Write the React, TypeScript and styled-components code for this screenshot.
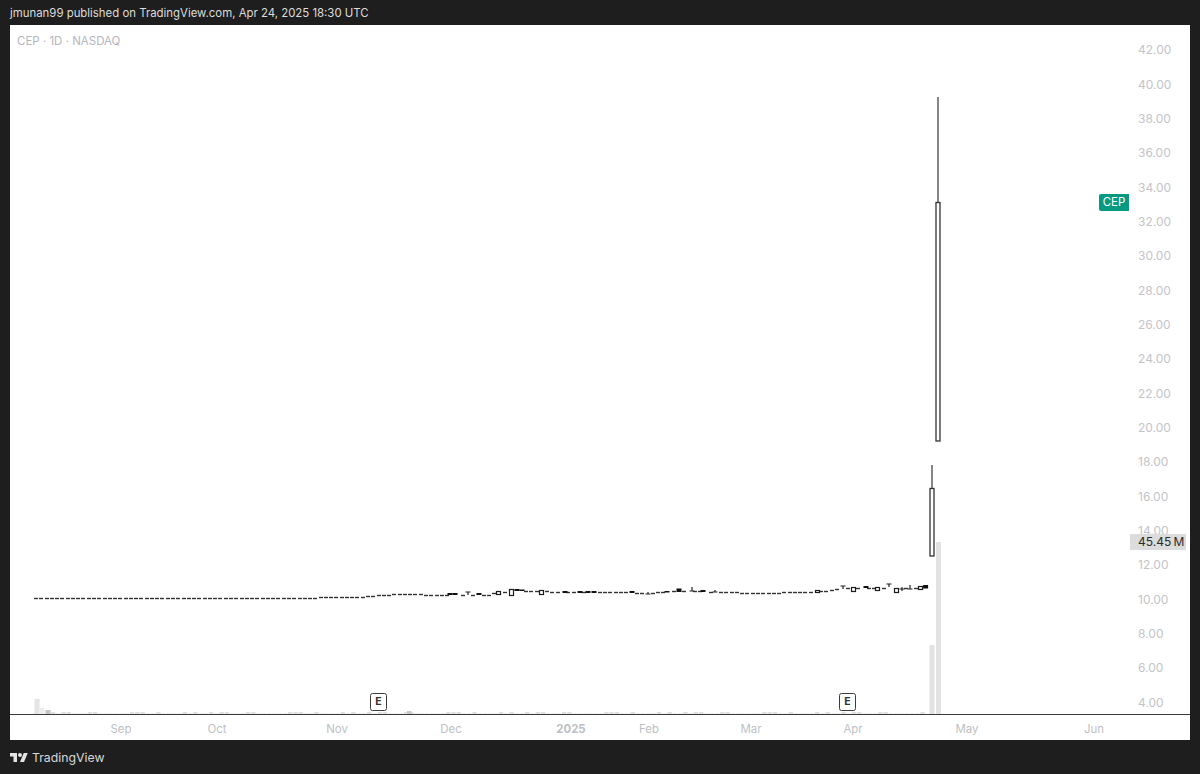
import React from "react";
import styled, { createGlobalStyle } from "styled-components";

const Global = createGlobalStyle`
  html, body { margin: 0; padding: 0; background: #1e1e1e; }
  body { font-family: Inter, "Liberation Sans", Arial, sans-serif; }
`;

const Page = styled.div`
  width: 1200px;
  height: 774px;
  background: #1e1e1e;
  display: flex;
  flex-direction: column;
  overflow: hidden;
`;
const Header = styled.header`
  height: 25px;
  padding: 0 0 0 10px;
  display: flex;
  align-items: center;
  color: #dcdcdc;
  font-size: 11.4px;
  line-height: 30px;
  white-space: nowrap;
`;
const Panel = styled.main`
  margin: 0 10px;
  height: 715px;
  background: #fff;
  display: flex;
  flex-direction: column;
`;
const ChartRow = styled.section`
  height: 689px;
  display: flex;
  border-bottom: 1px solid #3a3a3a;
  box-sizing: content-box;
`;
const Plot = styled.div`
  position: relative;
  flex: 1;
`;
const PlotSvg = styled.svg`
  display: block;
  width: 1120px;
  height: 689px;
`;
const Title = styled.div`
  position: absolute;
  left: 7px;
  top: 9px;
  font-size: 11.5px;
  line-height: 14px;
  color: #b4b6bc;
`;
const PriceTag = styled.div`
  position: absolute;
  right: 1px;
  top: 168.5px;
  width: 30px;
  height: 17px;
  background: #089981;
  border-radius: 2px 0 0 2px;
  color: #fff;
  font-size: 11.4px;
  line-height: 17px;
  text-align: center;
`;
const EarningsBadge = styled.div<{ $x: number }>`
  position: absolute;
  left: ${(p) => p.$x - 10}px;
  top: 668px;
  width: 15px;
  height: 16px;
  border: 1.5px solid #3c3c3c;
  border-radius: 2.5px;
  background: #fff;
  color: #333;
  font-size: 10.5px;
  font-weight: 700;
  line-height: 16px;
  text-align: center;
`;
const PriceAxis = styled.aside`
  position: relative;
  width: 60px;
  padding-top: 8.3px;
  display: flex;
  flex-direction: column;
`;
const PriceTick = styled.div`
  height: 34.34px;
  flex: none;
  padding-left: 8px;
  font-size: 12px;
  line-height: 34.34px;
  color: #c3c4c9;
`;
const VolumeTag = styled.div`
  position: absolute;
  left: 0;
  top: 509px;
  width: 56px;
  height: 16px;
  padding-left: 8px;
  box-sizing: border-box;
  background: #dcdcdc;
  color: #2a2a2a;
  font-size: 12px;
  line-height: 16px;
  white-space: nowrap;
`;
const TimeAxis = styled.div`
  position: relative;
  flex: 1;
`;
const TimeTick = styled.span<{ $x: number; $strong?: boolean }>`
  position: absolute;
  left: ${(p) => p.$x - 10}px;
  top: 5.5px;
  transform: translateX(-50%);
  font-size: 11.4px;
  line-height: 16px;
  font-weight: ${(p) => (p.$strong ? 700 : 400)};
  color: #bdbfc4;
`;
const Footer = styled.footer`
  flex: 1;
  display: flex;
  align-items: center;
  gap: 4px;
  padding: 0 0 0 10px;
  color: #d8d8d8;
  margin-top: 1px;
`;
const LogoMark = styled.svg`
  width: 18px;
  height: 14px;
  display: block;
`;
const BrandName = styled.span`
  font-size: 12.3px;
  line-height: 16px;
`;

const PRICES = ["42.00","40.00","38.00","36.00","34.00","32.00","30.00","28.00","26.00","24.00","22.00","20.00","18.00","16.00","14.00","12.00","10.00","8.00","6.00","4.00"];
const MONTHS: { label: string; x: number; strong?: boolean }[] = [
  { label: "Sep", x: 121 }, { label: "Oct", x: 217 }, { label: "Nov", x: 337 },
  { label: "Dec", x: 451 }, { label: "2025", x: 571, strong: true }, { label: "Feb", x: 649 },
  { label: "Mar", x: 751 }, { label: "Apr", x: 853 }, { label: "May", x: 967 }, { label: "Jun", x: 1094 },
];

// centre line of the candle row: [x, y] knots in page pixels
const KNOTS: [number, number][] = [
  [34, 598.5],[100, 598],[150, 598.3],[190, 597.8],[290, 597.6],[350, 597.4],[378, 595.5],[400, 593.6],
  [440, 595],[490, 594.5],[500, 592],[530, 590.6],[560, 592],[600, 591.5],[650, 593],[680, 590.5],
  [720, 592],[760, 593],[820, 591.5],[845, 588],[925, 587.5],
];
const centre = (x: number) => {
  for (let i = 1; i < KNOTS.length; i++) {
    const [x0, y0] = KNOTS[i - 1];
    const [x1, y1] = KNOTS[i];
    if (x <= x1) return y0 + ((y1 - y0) * (x - x0)) / (x1 - x0);
  }
  return 587.5;
};

type Shape = "hollow" | "solid" | "cross" | "foot" | "top";
const SPECIAL: [number, Shape, number, number][] = [
  [450, "solid", 593, 595], [455, "solid", 593, 595], [468, "top", 592, 595], [479, "solid", 593, 595],
  [498, "hollow", 590.5, 593.5], [511, "hollow", 589, 595], [517, "solid", 589, 591], [522, "solid", 589.5, 591],
  [541, "hollow", 589.5, 593.5], [565, "solid", 591, 593], [580, "solid", 591, 593], [588, "solid", 591, 593], [594, "solid", 591, 593],
  [632, "solid", 591, 593], [648, "foot", 592, 594], [667, "solid", 591, 592.5], [679, "solid", 588.5, 592],
  [692, "foot", 587, 591], [703, "solid", 590, 592], [715, "foot", 590, 592], [817, "hollow", 590, 592],
  [843, "top", 586, 589], [853, "hollow", 586.5, 590.5], [866, "solid", 586, 588], [877, "hollow", 586.5, 589.5],
  [889, "top", 584, 587], [896, "hollow", 587.5, 591.5], [902, "cross", 587, 591], [910, "foot", 585, 589],
  [920, "hollow", 585.5, 588.5], [925.6, "solid", 585, 588.5],
];

const Candles = () => {
  const step = 5.27;
  const items: React.ReactNode[] = [];
  for (let i = 0; i < 169; i++) {
    const x = 36 + i * step;
    const sp = SPECIAL.find((s) => Math.abs(s[0] - x) < step / 2);
    if (sp) continue;
    const y = Math.round(centre(x));
    const left = Math.round(x - 2);
    items.push(<rect key={i} x={left} y={y - 0.2} width={4} height={1.4} fill="#333" />);
  }
  SPECIAL.forEach(([x, kind, y0, y1], i) => {
    const k = `s${i}`;
    if (kind === "hollow") items.push(<rect key={k} x={Math.round(x) - 1.5} y={Math.round(y0) + 0.5} width={4} height={Math.round(y1 - y0)} fill="#fff" stroke="#1c1c1c" strokeWidth={1.2} />);
    if (kind === "solid") items.push(<rect key={k} x={x - 2.5} y={y0} width={5} height={y1 - y0} fill="#111" />);
    if (kind === "cross") items.push(<path key={k} d={`M${x} ${y0}V${y1}M${x - 2.5} ${(y0 + y1) / 2}H${x + 2.5}`} stroke="#222" strokeWidth={1.2} fill="none" />);
    if (kind === "foot") items.push(<path key={k} d={`M${x} ${y0}V${y1}M${x - 2.5} ${y1}H${x + 2.5}`} stroke="#222" strokeWidth={1.2} fill="none" />);
    if (kind === "top") items.push(<path key={k} d={`M${x} ${y0}V${y1}M${x - 2.5} ${y0}H${x + 2.5}`} stroke="#222" strokeWidth={1.2} fill="none" />);
  });
  return <g>{items}</g>;
};

const HEIGHTS = [2,1,1,2,1,2,2,1,1,1,2,2,1,1,1,1,1,1,2,2,2,1,1,2,1,1,1,1,2,1];
const Volumes = () => {
  const step = 5.27;
  const items: React.ReactNode[] = [];
  for (let i = 3; i < 169; i++) {
    const x = 35 + i * step;
    const h = HEIGHTS[i % HEIGHTS.length];
    items.push(<rect key={i} x={x} y={714 - h} width={4.4} height={h} fill={h === 2 ? "#e0e0e0" : "#eeeeee"} />);
  }
  return (
    <g>
      <rect x={34.5} y={699} width={5} height={15} fill="#e4e4e4" />
      <rect x={40} y={708} width={4.5} height={6} fill="#ededed" />
      <rect x={45.5} y={710} width={5} height={4} fill="#c4c4c4" />
      {items}
      <rect x={407} y={711} width={4.4} height={3} fill="#c8c8c8" />
      <rect x={929.5} y={645} width={5} height={69} fill="#e3e3e3" />
      <rect x={936} y={542} width={5} height={172} fill="#e3e3e3" />
    </g>
  );
};

const Chart = () => (
  <PlotSvg viewBox="10 25 1120 689" aria-hidden="true">
    <Volumes />
    <Candles />
    <path d="M932 465V488" stroke="#444" strokeWidth={1.3} />
    <rect x={930} y={488.5} width={4} height={67.5} fill="#fff" stroke="#333" strokeWidth={1.3} />
    <path d="M938 97V202" stroke="#444" strokeWidth={1.3} />
    <rect x={936} y={202.5} width={4} height={238.5} fill="#fff" stroke="#333" strokeWidth={1.3} />
  </PlotSvg>
);

export default function App() {
  return (
    <Page>
      <Global />
      <Header>jmunan99 published on TradingView.com, Apr 24, 2025 18:30 UTC</Header>
      <Panel>
        <ChartRow>
          <Plot>
            <Chart />
            <Title>CEP · 1D · NASDAQ</Title>
            <PriceTag>CEP</PriceTag>
            <EarningsBadge $x={370}>E</EarningsBadge>
            <EarningsBadge $x={839}>E</EarningsBadge>
          </Plot>
          <PriceAxis>
            {PRICES.map((p) => <PriceTick key={p}>{p}</PriceTick>)}
            <VolumeTag>45.45{"\u2009"}M</VolumeTag>
          </PriceAxis>
        </ChartRow>
        <TimeAxis>
          {MONTHS.map((m) => <TimeTick key={m.label} $x={m.x} $strong={m.strong}>{m.label}</TimeTick>)}
        </TimeAxis>
      </Panel>
      <Footer>
        <LogoMark viewBox="0 0 36 28" aria-label="TradingView logo">
          <path fill="#e4e4e4" d="M14 22H7V11H0V4h14v18zM28 22h-8l7.5-18h8L28 22z" />
          <circle fill="#e4e4e4" cx="20" cy="8" r="4" />
        </LogoMark>
        <BrandName>TradingView</BrandName>
      </Footer>
    </Page>
  );
}
